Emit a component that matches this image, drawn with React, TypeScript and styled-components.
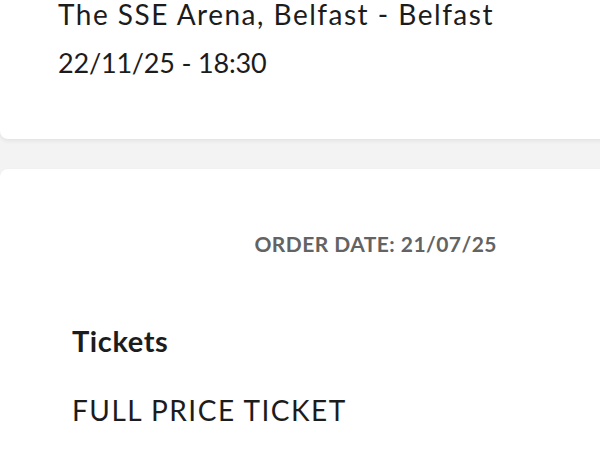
import styled, { createGlobalStyle } from "styled-components";

const Global = createGlobalStyle`
  html, body {
    margin: 0;
    padding: 0;
    background: #f3f3f3;
    font-family: Lato, "Open Sans", sans-serif;
    color: #1c1c1c;
    overflow: hidden;
  }
`;

const Page = styled.div`
  display: flex;
  flex-direction: column;
  gap: 30px;
  width: 600px;
  height: 450px;
`;

const Card = styled.div<{ $top?: boolean }>`
  background: #fff;
  border-radius: ${(p) => (p.$top ? "0 0 8px 8px" : "8px 8px 0 0")};
  box-shadow: 0 2px 4px rgba(0, 0, 0, 0.07);
  margin-right: -20px;
`;

const EventCard = styled(Card)`
  height: 139px;
  box-sizing: border-box;
  padding: 0 0 0 58px;
  display: flex;
  flex-direction: column;
  gap: 19px;
`;

const EventLine = styled.div<{ $spacing: number; $size: number }>`
  font-size: ${(p) => p.$size}px;
  letter-spacing: ${(p) => p.$spacing}px;
  line-height: 29px;
  font-weight: 400;
  white-space: nowrap;
`;

const OrderCard = styled(Card)`
  flex: 1;
  padding: 62px 0 0 72px;
`;

const OrderDate = styled.div`
  display: flex;
  justify-content: flex-end;
  padding-right: 123px;
  font-size: 21px;
  line-height: 1.2;
  font-weight: 700;
  letter-spacing: 0.45px;
  color: #636363;
`;

const SectionTitle = styled.h2`
  margin: 68px 0 0;
  font-size: 29px;
  line-height: 1.2;
  font-weight: 700;
  letter-spacing: 0.6px;
`;

const TicketName = styled.div`
  margin-top: 35px;
  font-size: 28px;
  line-height: 1.2;
  font-weight: 400;
  letter-spacing: 1.5px;
`;

export default function App() {
  return (
    <>
      <Global />
      <Page>
        <EventCard $top>
          <EventLine $size={28} $spacing={1.5}>
            The SSE Arena, Belfast - Belfast
          </EventLine>
          <EventLine $size={27} $spacing={-0.2}>
            22/11/25 - 18:30
          </EventLine>
        </EventCard>
        <OrderCard>
          <OrderDate>ORDER DATE: 21/07/25</OrderDate>
          <SectionTitle>Tickets</SectionTitle>
          <TicketName>FULL PRICE TICKET</TicketName>
        </OrderCard>
      </Page>
    </>
  );
}
